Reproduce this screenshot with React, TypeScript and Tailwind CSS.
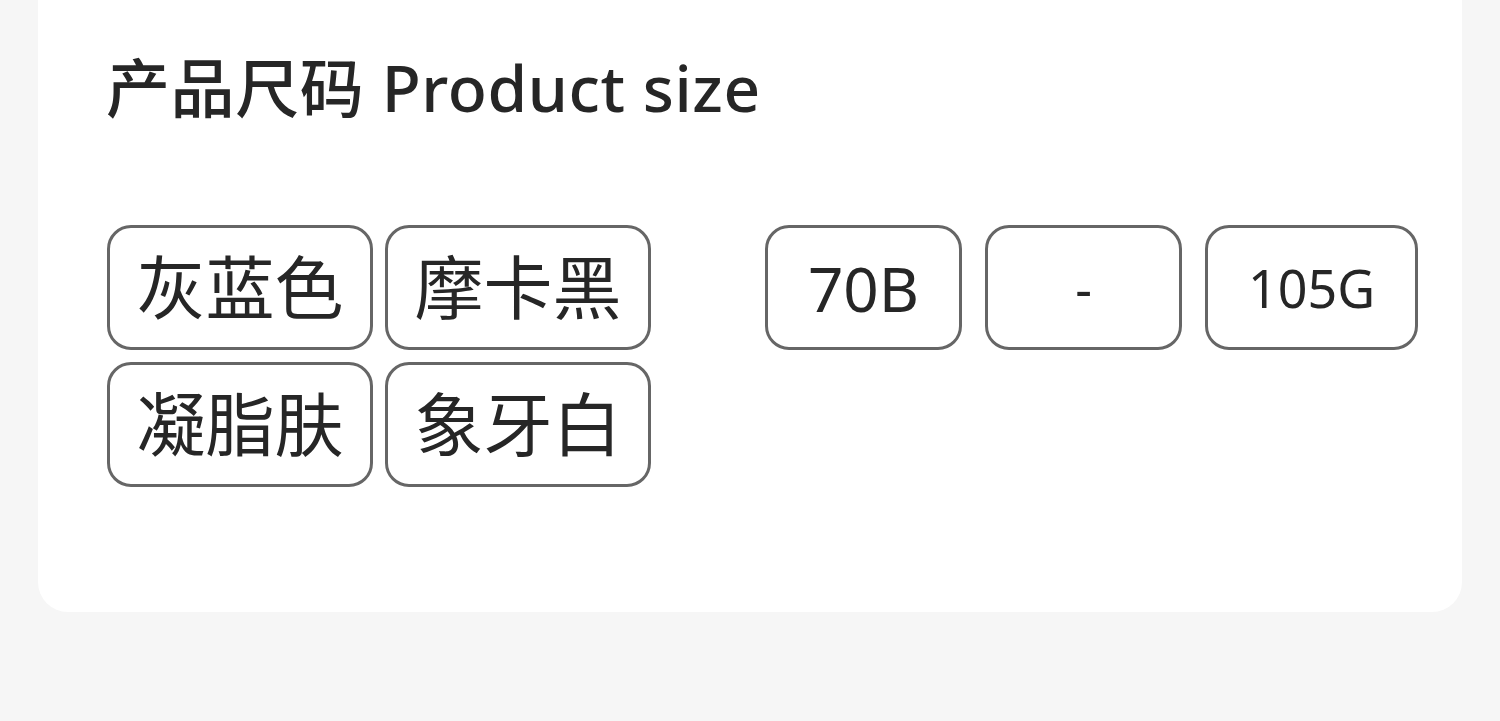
const colors = [
	["灰蓝色", "摩卡黑"],
	["凝脂肤", "象牙白"],
];

const sizes = [
	{ label: "70B", w: "w-[197px]", text: "text-[62px]" },
	{ label: "-", w: "w-[197px]", text: "text-[52px]" },
	{ label: "105G", w: "w-[213px]", text: "text-[52px]" },
];

const font = { fontFamily: '"Noto Sans", "Noto Sans CJK SC", sans-serif' };

function Chip({ children, className }: { children: React.ReactNode; className: string }) {
	return (
		<div
			className={`flex h-[125px] items-center justify-center rounded-[24px] border-[3px] border-[#666] bg-white text-[#262626] ${className}`}
		>
			{children}
		</div>
	);
}

export default function App() {
	return (
		<div className="h-[721px] w-[1500px] overflow-hidden bg-[#f6f6f6]" style={font}>
			<div className="mx-[38px] h-[612px] rounded-b-[30px] bg-white pl-[69px] pt-[46px]">
				<h2 className="-ml-px text-[64px] leading-[84px] font-medium tracking-[0.6px] text-[#262626]">产品尺码 Product size</h2>

				<div className="mt-[95px] flex">
					<div className="flex flex-col gap-[12px]">
						{colors.map((row, i) => (
							<div key={i} className="flex gap-[12px]">
								{row.map((c) => (
									<Chip key={c} className="w-[266px] text-[69px] leading-none">
										{c}
									</Chip>
								))}
							</div>
						))}
					</div>

					<div className="ml-[114px] flex gap-[23px]">
						{sizes.map((s) => (
							<Chip key={s.label} className={`${s.w} ${s.text} leading-none`}>
								{s.label}
							</Chip>
						))}
					</div>
				</div>
			</div>
		</div>
	);
}
